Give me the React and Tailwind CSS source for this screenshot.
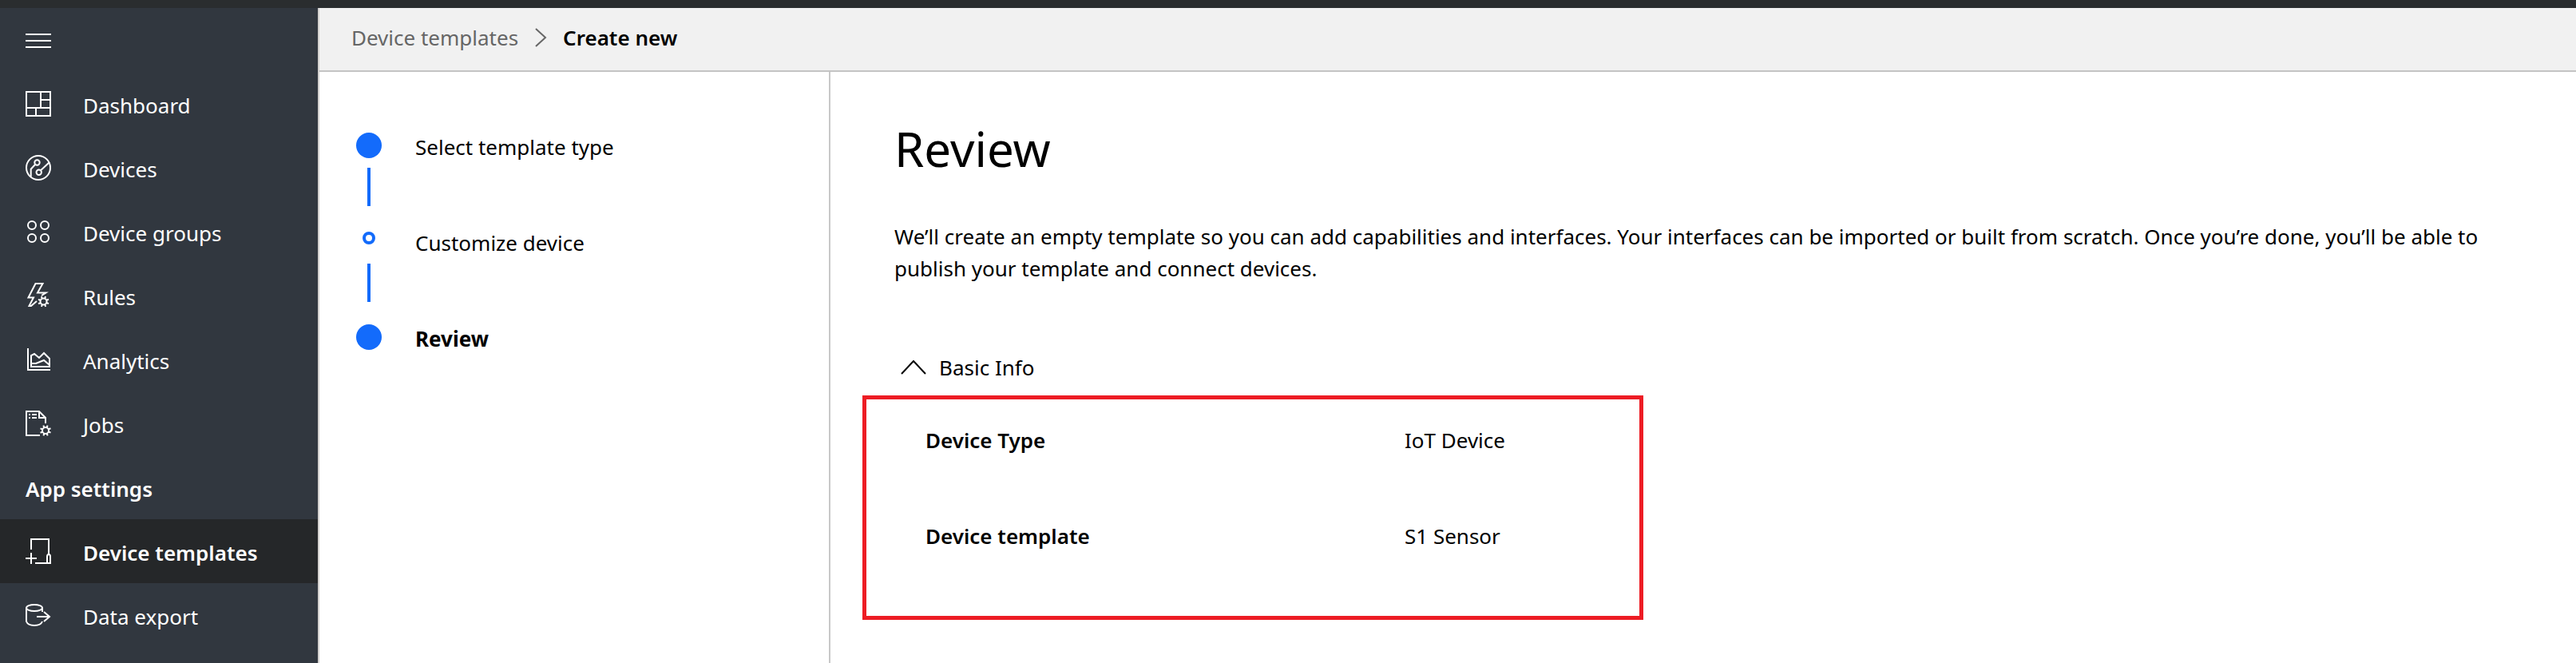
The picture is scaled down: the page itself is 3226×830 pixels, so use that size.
const Svg = ({ children }) => (
  <svg viewBox="0 0 32 32" width="32" height="32" fill="none" stroke="currentColor" strokeWidth="2" className="shrink-0" aria-hidden="true">
    {children}
  </svg>
);

const Gear = ({ cx, cy }) => (
  <g transform={`translate(${cx} ${cy})`}>
    <circle r="4" />
    {[22, 67, 112, 157, 202, 247, 292, 337].map((a) => (
      <path key={a} d="M0-4V-7" transform={`rotate(${a})`} />
    ))}
  </g>
);

const icons = {
  menu: <path d="M0 9H32M0 17H32M0 25H32" />,
  dashboard: <path d="M1 1H31V31H1ZM19 1V21M19 11H31M1 21H31M13 21V31" />,
  devices: (
    <>
      <circle cx="16" cy="16" r="15" />
      <circle cx="14.5" cy="9.5" r="3.2" />
      <circle cx="16.7" cy="21.7" r="3.2" />
      <path d="M12 12L6.7 17.7V27.5M19 19.3L30 9" />
    </>
  ),
  groups: (
    <>
      <circle cx="8" cy="8" r="5" />
      <circle cx="24" cy="8" r="5" />
      <circle cx="8" cy="24" r="5" />
      <circle cx="24" cy="24" r="5" />
    </>
  ),
  rules: (
    <>
      <path d="M14 23L7 29H4.5L10 18.5H3.5L12.500 1H21.5L15 12.500H25.500L20 16" />
      <Gear cx="22.5" cy="23.5" />
    </>
  ),
  analytics: (
    <>
      <path d="M3 2V29H31" />
      <path d="M7 25V11L11 9L17 14L23 8L30 15V25ZM7 21H13L23 17L30 23" />
    </>
  ),
  jobs: (
    <>
      <path d="M18 31H1V1H17L25 9V16M17 1V9H25M4 5H6M8 5H14M4 9H6M8 9H14" />
      <Gear cx="25" cy="25" />
    </>
  ),
  templates: <path d="M7 14V1H29V20M7 18V32M0 25H14M12 31H31V23Q31 20 29 20Q27 20 27 23V31" />,
  dataExport: (
    <>
      <ellipse cx="11" cy="7" rx="10" ry="4" />
      <path d="M1 7V24Q3 29 11 29Q19 29 21 24M21 7V12M14 18H30M23 12L30 18L23 24" />
    </>
  ),
};

const nav = [
  { label: "Dashboard", icon: "dashboard" },
  { label: "Devices", icon: "devices" },
  { label: "Device groups", icon: "groups" },
  { label: "Rules", icon: "rules" },
  { label: "Analytics", icon: "analytics" },
  { label: "Jobs", icon: "jobs" },
];
const settingsNav = [
  { label: "Device templates", icon: "templates", active: true },
  { label: "Data export", icon: "dataExport" },
];

function NavItem({ label, icon, active }) {
  return (
    <li>
      <a
        href="#"
        aria-current={active ? "page" : undefined}
        className={`flex h-20 items-center gap-10 px-8 ${active ? "bg-[#252729] font-semibold" : ""}`}
      >
        <Svg>{icons[icon]}</Svg>
        <span className="whitespace-nowrap pt-1">{label}</span>
      </a>
    </li>
  );
}

const steps = [
  { label: "Select template type", dot: "size-8 bg-[#136bfb]" },
  { label: "Customize device", dot: "mt-1 size-4 border-4 border-[#136bfb]" },
  { label: "Review", dot: "size-8 bg-[#136bfb]", current: true },
];

const details = [
  ["Device Type", "IoT Device"],
  ["Device template", "S1 Sensor"],
];

export default function App() {
  return (
    <div className="flex min-h-screen flex-col bg-white font-['Noto_Sans','Open_Sans',sans-serif] text-[26px] leading-10 text-black">
      <div className="h-[10px] bg-[#2a2d2f]" />
      <div className="flex flex-1">
        <nav className="w-100 shrink-0 border-r-2 border-[#d2d0ce] bg-[#31373f] text-white">
          <button type="button" aria-label="Toggle navigation" className="flex h-20 items-center px-8">
            <Svg>{icons.menu}</Svg>
          </button>
          <ul>
            {nav.map((n) => (
              <NavItem key={n.label} {...n} />
            ))}
          </ul>
          <h2 className="flex h-20 items-center px-8 pt-1 font-semibold">App settings</h2>
          <ul>
            {settingsNav.map((n) => (
              <NavItem key={n.label} {...n} />
            ))}
          </ul>
        </nav>
        <div className="flex min-w-0 flex-1 flex-col">
          <header className="flex h-20 items-center gap-5 border-b-2 border-[#c4c4c4] bg-[#f1f1f1] px-10 pb-1">
            <a href="#" className="text-[#666666]">Device templates</a>
            <svg viewBox="0 0 16 24" width="16" height="24" fill="none" stroke="#666666" strokeWidth="2" aria-hidden="true">
              <path d="M2 1L14 12L2 23" />
            </svg>
            <span className="font-semibold">Create new</span>
          </header>
          <div className="flex flex-1">
            <ol className="w-160 shrink-0 border-r-2 border-[#c8c8c8] px-[46px] pt-[76px]">
              {steps.map((s, i) => (
                <li key={s.label} className="flex h-30 gap-[42px]">
                  <div className="flex w-8 flex-col items-center gap-3">
                    <div className="flex h-8 items-start">
                      <span className={`rounded-full ${s.dot}`} />
                    </div>
                    {i < 2 && <span className="h-12 w-1 bg-[#136bfb]" />}
                  </div>
                  <span className={s.current ? "leading-9 font-bold" : "leading-9"}>{s.label}</span>
                </li>
              ))}
            </ol>
            <main className="min-w-0 flex-1 px-20 pt-14">
              <h1 className="text-[60px] leading-20">Review</h1>
              <p className="mt-[50px]">
                We’ll create an empty template so you can add capabilities and interfaces. Your interfaces can be imported or built from scratch. Once you’re done, you’ll be able to publish your template and connect devices.
              </p>
              <button type="button" aria-expanded="true" className="mt-[84px] flex items-center gap-4 px-2">
                <svg viewBox="0 0 32 18" width="32" height="18" fill="none" stroke="currentColor" strokeWidth="2" aria-hidden="true">
                  <path d="M1 17L16 1L31 17" />
                </svg>
                Basic Info
              </button>
              <dl className="-ml-10 mt-[15px] w-[978px] border-[5px] border-[#ed1c24] pl-[74px] pt-[31px]">
                {details.map(([k, v]) => (
                  <div key={k} className="flex h-30">
                    <dt className="w-150 font-semibold">{k}</dt>
                    <dd>{v}</dd>
                  </div>
                ))}
              </dl>
            </main>
          </div>
        </div>
      </div>
    </div>
  );
}
